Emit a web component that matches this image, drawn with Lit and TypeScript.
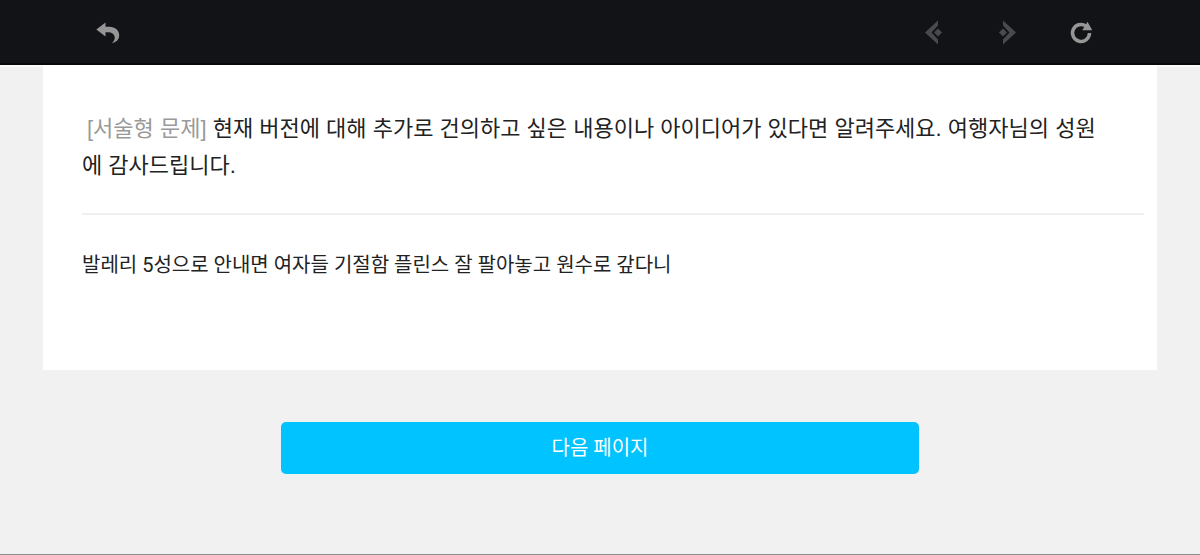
import { LitElement, html, css } from "lit";
import { customElement, state } from "lit/decorators.js";

@customElement("app-root")
export class AppRoot extends LitElement {
  static styles = css`
    :host {
      display: flex;
      flex-direction: column;
      min-height: 100vh;
      box-sizing: border-box;
      background: #f1f1f1;
      border-bottom: 1px solid #8c8c8c;
      color: #222;
      font-family: Roboto, "Noto Sans CJK KR", sans-serif;
    }
    .bar {
      display: flex;
      align-items: center;
      justify-content: space-between;
      height: 65px;
      padding: 0 106px 0 95px;
      box-sizing: border-box;
      background: #121316;
      box-shadow: inset 0 -2px #08080a;
    }
    .group {
      display: flex;
      gap: 49px;
    }
    .icon {
      display: block;
      width: 25px;
      height: 25px;
      padding: 0;
      border: 0;
      background: none;
      color: #969696;
      cursor: pointer;
    }
    .icon:disabled {
      color: #494a4c;
      cursor: default;
    }
    .icon svg {
      display: block;
      width: 25px;
      height: 25px;
    }
    .page {
      display: flex;
      flex-direction: column;
      align-items: center;
      gap: 52px;
      padding: 0 43px 80px;
      border-top: 2px solid #fafafa;
    }
    .card {
      width: 100%;
      box-sizing: border-box;
      margin-top: -2px;
      padding: 45px 13px 43px 39px;
      background: #fff;
    }
    .question {
      display: block;
      margin: 0;
      padding: 0 39px 29px 0;
      border-bottom: 2px solid #efefef;
      font-family: "Liberation Sans", "Noto Sans CJK KR", sans-serif;
      font-size: 22px;
      line-height: 37px;
      font-weight: 400;
    }
    .kind {
      margin-left: 5px;
      color: #999;
    }
    .answer {
      display: block;
      width: 100%;
      height: 80px;
      margin: 32px 0 0;
      padding: 0;
      border: 0;
      outline: 0;
      resize: none;
      background: none;
      color: inherit;
      font-family: inherit;
      font-size: 20px;
      line-height: 36px;
    }
    .next {
      width: 57.3%;
      height: 52px;
      padding: 0 0 3px;
      border: 0;
      border-radius: 5px;
      background: #00c3ff;
      color: #fff;
      font-family: inherit;
      font-size: 20px;
      cursor: pointer;
    }
  `;

  @state() private answer =
    "발레리 5성으로 안내면 여자들 기절함 플린스 잘 팔아놓고 원수로 갚다니";

  private onInput(e: Event) {
    this.answer = (e.target as HTMLTextAreaElement).value;
  }

  render() {
    return html`
      <header class="bar">
        <button class="icon" type="button" aria-label="뒤로">
          <svg viewBox="0 0 25 25" fill="currentColor">
            <path d="M1.300 9.500 10.500 2.500V6.700H14C20.500 6.700 24.200 10.500 24.200 15.200C24.200 19.500 21.500 22 17 23.200C19.700 20.500 20.300 18.300 19.300 15.800C18.400 13.500 16.500 12.200 13.500 12.200H10.500V16.500Z" />
          </svg>
        </button>
        <nav class="group">
          <button class="icon" type="button" aria-label="이전" disabled>
            <svg viewBox="0 0 25 25" fill="currentColor">
              <path d="M17 .5V5.500L10.500 12.500L17 19.500V24.500L4 12.500Z M17 8.500 21 12.500 17 16.500 13 12.500Z" />
            </svg>
          </button>
          <button class="icon" type="button" aria-label="다음" disabled>
            <svg viewBox="0 0 25 25" fill="currentColor">
              <path d="M8 .5V5.500L14.500 12.500L8 19.500V24.500L21 12.500Z M8 8.500 12 12.500 8 16.500 4 12.500Z" />
            </svg>
          </button>
          <button class="icon" type="button" aria-label="새로고침">
            <svg viewBox="0 0 25 25" fill="currentColor">
              <path d="M17 6.100A8.500 8.500 0 1 0 20.500 13" fill="none" stroke="currentColor" stroke-width="3.500" />
              <path d="M18.500 1.800 23.300 10.300H13.200Z" />
            </svg>
          </button>
        </nav>
      </header>
      <main class="page">
        <section class="card">
          <label class="question" for="answer"
            ><span class="kind">[서술형 문제]</span>
            <span
              >현재 버전에 대해 추가로 건의하고 싶은 내용이나 아이디어가 있다면 알려주세요. 여행자님의 성원에 감사드립니다.</span
            ></label
          >
          <textarea
            class="answer"
            id="answer"
            spellcheck="false"
            .value=${this.answer}
            @input=${this.onInput}
          ></textarea>
        </section>
        <button class="next" type="button">다음 페이지</button>
      </main>
    `;
  }
}
